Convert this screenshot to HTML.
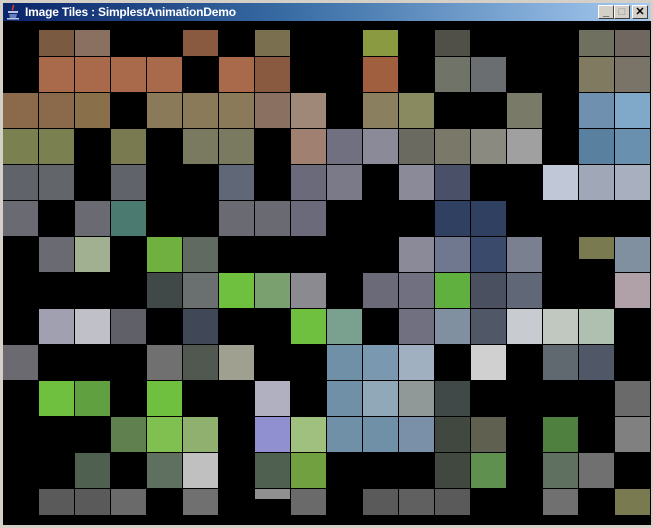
<!DOCTYPE html>
<html><head><style>
*{margin:0;padding:0;box-sizing:border-box}
body{width:653px;height:528px;background:#d4d0c8;position:relative;overflow:hidden;font-family:"Liberation Sans",sans-serif}
#tb{position:absolute;left:3px;top:3px;width:647px;height:18px;background:linear-gradient(to right,#0a246a,#3a6ea5 45%,#a6caf0)}
#tt{position:absolute;left:22px;top:2px;color:#fff;font-weight:bold;font-size:12px;letter-spacing:-0.2px}
.b{position:absolute;top:2px;width:16px;height:14px;background:#d4d0c8;border:1px solid;border-color:#fff #404040 #404040 #fff;font-size:11px;font-weight:bold;text-align:center;line-height:12px;color:#000}
#c{position:absolute;left:3px;top:21px;width:648px;height:504px;background:#000}
#g{position:absolute;left:0;top:0;display:grid;grid-template-columns:repeat(18,35px);grid-template-rows:repeat(14,35px);gap:1px}
#g div{background:#000}
.r0{border-top:9px solid #000}
</style></head><body>
<div id="tb"><svg width="14" height="16" style="position:absolute;left:3px;top:1px" viewBox="0 0 14 16"><path d="M7 1c2 2-2 3 0 5" stroke="#e04020" fill="none" stroke-width="1.5"/><rect x="2" y="7" width="10" height="2" fill="#c0c0e0"/><path d="M3 10h8l-1 4H4z" fill="#6080c0"/><rect x="1" y="14" width="12" height="1.5" fill="#c0c0e0"/></svg><span id="tt">Image Tiles : SimplestAnimationDemo</span>
<div class="b" style="left:595px">_</div><div class="b" style="left:611px;color:#888">□</div><div class="b" style="left:629px">✕</div></div>
<div id="c"><div id="g">
<div></div><div class="r0" style="background:#7a5a40"></div><div class="r0" style="background:#8a7060"></div><div></div><div></div><div class="r0" style="background:#8a5a40"></div><div></div><div class="r0" style="background:#7a7050"></div><div></div><div></div><div class="r0" style="background:#8a9a40"></div><div></div><div class="r0" style="background:#505048"></div><div></div><div></div><div></div><div class="r0" style="background:#707060"></div><div class="r0" style="background:#706860"></div>
<div></div><div style="background:#a86a4a"></div><div style="background:#a86a4a"></div><div style="background:#a86a4a"></div><div style="background:#a86a4a"></div><div></div><div style="background:#a86a4a"></div><div style="background:#8a5a40"></div><div></div><div></div><div style="background:#a06040"></div><div></div><div style="background:#707468"></div><div style="background:#6a6e70"></div><div></div><div></div><div style="background:#807a60"></div><div style="background:#7a7468"></div>
<div style="background:#8a6a4a"></div><div style="background:#8a6a4a"></div><div style="background:#8a704a"></div><div></div><div style="background:#8a7a5a"></div><div style="background:#8a7a5a"></div><div style="background:#8a7a5a"></div><div style="background:#8a7060"></div><div style="background:#a08878"></div><div></div><div style="background:#8a8060"></div><div style="background:#8a8a60"></div><div></div><div></div><div style="background:#7a7a68"></div><div></div><div style="background:#7090b0"></div><div style="background:#80a8c8"></div>
<div style="background:#7a8050"></div><div style="background:#7a8050"></div><div></div><div style="background:#7a7a50"></div><div></div><div style="background:#7a7a60"></div><div style="background:#7a7a60"></div><div></div><div style="background:#a08070"></div><div style="background:#707080"></div><div style="background:#8a8a98"></div><div style="background:#6a6a60"></div><div style="background:#7a7868"></div><div style="background:#8a8a80"></div><div style="background:#a0a0a0"></div><div></div><div style="background:#5a80a0"></div><div style="background:#6a90b0"></div>
<div style="background:#60646a"></div><div style="background:#62666a"></div><div></div><div style="background:#60646a"></div><div></div><div></div><div style="background:#606878"></div><div></div><div style="background:#6a6a7a"></div><div style="background:#7a7a88"></div><div></div><div style="background:#8a8a98"></div><div style="background:#4a5068"></div><div></div><div></div><div style="background:#c0c8d8"></div><div style="background:#a0a8b8"></div><div style="background:#a8b0c0"></div>
<div style="background:#6a6a72"></div><div></div><div style="background:#6a6a72"></div><div style="background:#4a7a70"></div><div></div><div></div><div style="background:#6a6a72"></div><div style="background:#6a6a72"></div><div style="background:#6a6a7a"></div><div></div><div></div><div></div><div style="background:#304060"></div><div style="background:#304060"></div><div></div><div></div><div></div><div></div>
<div></div><div style="background:#6a6a72"></div><div style="background:#a0b090"></div><div></div><div style="background:#70b040"></div><div style="background:#606a60"></div><div></div><div></div><div></div><div></div><div></div><div style="background:#8a8a98"></div><div style="background:#707890"></div><div style="background:#3a4a6a"></div><div style="background:#7a8090"></div><div></div><div style="background:linear-gradient(#7a7a50 0 22px,#000 22px)"></div><div style="background:#8090a0"></div>
<div></div><div></div><div></div><div></div><div style="background:#404848"></div><div style="background:#6a7070"></div><div style="background:#70c040"></div><div style="background:#7aa070"></div><div style="background:#8a8a90"></div><div></div><div style="background:#6a6a78"></div><div style="background:#707080"></div><div style="background:#60b040"></div><div style="background:#4a5060"></div><div style="background:#606878"></div><div></div><div></div><div style="background:#b0a0a8"></div>
<div></div><div style="background:#a0a0b0"></div><div style="background:#c0c0c8"></div><div style="background:#606068"></div><div></div><div style="background:#404858"></div><div></div><div></div><div style="background:#70c040"></div><div style="background:#7aa090"></div><div></div><div style="background:#707080"></div><div style="background:#8090a0"></div><div style="background:#505868"></div><div style="background:#c8ccd0"></div><div style="background:#c0c8c0"></div><div style="background:#b0c0b0"></div><div></div>
<div style="background:#6a6a70"></div><div></div><div></div><div></div><div style="background:#707070"></div><div style="background:#505850"></div><div style="background:#a0a090"></div><div></div><div></div><div style="background:#7090a8"></div><div style="background:#7a98b0"></div><div style="background:#a0b0c0"></div><div></div><div style="background:#d0d0d0"></div><div></div><div style="background:#606870"></div><div style="background:#505868"></div><div></div>
<div></div><div style="background:#70c040"></div><div style="background:#60a040"></div><div></div><div style="background:#70c040"></div><div></div><div></div><div style="background:#b0b0c0"></div><div></div><div style="background:#7090a8"></div><div style="background:#90a8b8"></div><div style="background:#909898"></div><div style="background:#404848"></div><div></div><div></div><div></div><div></div><div style="background:#6a6a6a"></div>
<div></div><div></div><div></div><div style="background:#608050"></div><div style="background:#80c050"></div><div style="background:#90b070"></div><div></div><div style="background:#9090d0"></div><div style="background:#a0c080"></div><div style="background:#7090a8"></div><div style="background:#7090a8"></div><div style="background:#7a90a8"></div><div style="background:#404840"></div><div style="background:#606050"></div><div></div><div style="background:#508040"></div><div></div><div style="background:#808080"></div>
<div></div><div></div><div style="background:#506050"></div><div></div><div style="background:#607060"></div><div style="background:#c0c0c0"></div><div></div><div style="background:#506050"></div><div style="background:#70a040"></div><div></div><div></div><div></div><div style="background:#404840"></div><div style="background:#609050"></div><div></div><div style="background:#607060"></div><div style="background:#707070"></div><div></div>
<div></div><div style="background:linear-gradient(#5a5a5a 0 26px,#000 26px)"></div><div style="background:linear-gradient(#5a5a5a 0 26px,#000 26px)"></div><div style="background:linear-gradient(#6a6a6a 0 26px,#000 26px)"></div><div></div><div style="background:linear-gradient(#707070 0 26px,#000 26px)"></div><div></div><div style="background:linear-gradient(#909090 0 10px,#000 10px)"></div><div style="background:linear-gradient(#6a6a6a 0 26px,#000 26px)"></div><div></div><div style="background:linear-gradient(#5a5a5a 0 26px,#000 26px)"></div><div style="background:linear-gradient(#606060 0 26px,#000 26px)"></div><div style="background:linear-gradient(#5a5a5a 0 26px,#000 26px)"></div><div></div><div></div><div style="background:linear-gradient(#707070 0 26px,#000 26px)"></div><div></div><div style="background:linear-gradient(#7a7a50 0 26px,#000 26px)"></div>
</div></div>
</body></html>
